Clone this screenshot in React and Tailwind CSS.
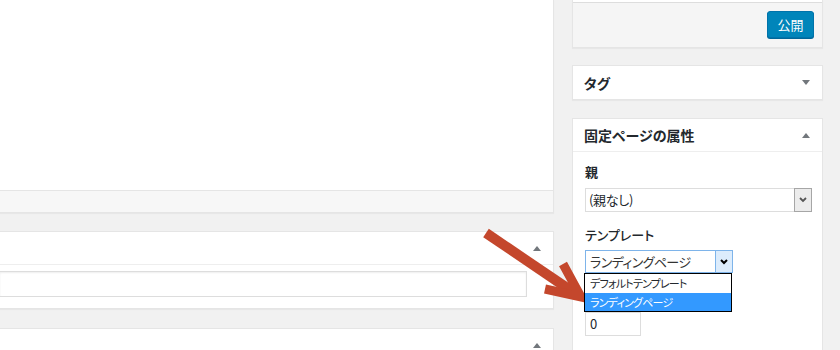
import React from "react";

const TriUp = () => (
  <svg width="8" height="5" viewBox="0 0 8 5"><polygon points="0,5 8,5 4,0" fill="#72777c" /></svg>
);
const TriDown = () => (
  <svg width="8" height="5" viewBox="0 0 8 5"><polygon points="0,0 8,0 4,5" fill="#72777c" /></svg>
);

export default function App() {
  return (
    <div
      className="relative w-[840px] h-[350px] overflow-hidden bg-[#f1f1f1] flex gap-[18px] text-[#23282d] [font-feature-settings:'palt']"
      style={{ fontFamily: '"Noto Sans CJK JP", "Noto Sans", sans-serif' }}
    >
      {/* left column */}
      <div className="w-[554px] shrink-0 flex flex-col">
        <div className="shrink-0 h-[213px] bg-white border-r border-b border-[#e5e5e5] flex flex-col shadow-[0_1px_1px_rgba(0,0,0,0.04)]">
          <div className="flex-1" />
          <div className="h-[22px] bg-[#f7f7f7] border-t border-[#e5e5e5]" />
        </div>
        <div className="shrink-0 mt-[18px] h-[78px] bg-white border-y border-r border-[#e5e5e5] shadow-[0_1px_1px_rgba(0,0,0,0.04)]">
          <div className="h-[33px] border-b border-[#eee] flex items-center justify-end pr-[12px]">
            <TriUp />
          </div>
          <div className="pt-[6px]">
            <div className="w-[527px] h-[26px] border border-l-0 border-[#ddd] bg-white shadow-[inset_0_1px_2px_rgba(0,0,0,0.07)]" />
          </div>
        </div>
        <div className="shrink-0 mt-[19px] h-[80px] bg-white border-t border-r border-[#e5e5e5]">
          <div className="h-[33px] flex items-center justify-end pr-[12px]">
            <TriUp />
          </div>
        </div>
      </div>

      {/* right column */}
      <div className="w-[251px] shrink-0 flex flex-col">
        <div className="shrink-0 h-[48px] bg-white border-x border-b border-[#e5e5e5] shadow-[0_1px_1px_rgba(0,0,0,0.04)] flex flex-col">
          <div className="h-[2px]" />
          <div className="flex-1 bg-[#f5f5f5] border-t border-[#ddd] flex items-start justify-end pr-[8px] pt-[8px]">
            <button className="h-[27px] w-[47px] rounded-[3px] bg-[#0085ba] border border-[#0073aa] shadow-[0_1px_0_#006799] text-white text-[13px] leading-none flex items-center justify-center">
              公開
            </button>
          </div>
        </div>

        <div className="shrink-0 mt-[17px] h-[35px] bg-white border border-[#e5e5e5] shadow-[0_1px_1px_rgba(0,0,0,0.04)] flex items-center justify-between pl-[11px] pr-[12px]">
          <span className="text-[14px] font-semibold leading-none">タグ</span>
          <TriDown />
        </div>

        <div className="shrink-0 mt-[18px] h-[260px] bg-white border border-[#e5e5e5]">
          <div className="h-[33px] border-b border-[#eee] flex items-center justify-between pl-[11px] pr-[12px]">
            <span className="text-[14px] font-semibold leading-none">固定ページの属性</span>
            <TriUp />
          </div>
          <div className="pl-[12px]">
            <div className="mt-[11px] h-[18px] text-[13px] font-semibold leading-[18px]">親</div>
            <div className="mt-[7px] w-[227px] h-[24px] border border-[#ddd] flex items-stretch bg-white">
              <div className="flex-1 pl-[3px] text-[13px] leading-[22px] tracking-[-0.3px]">(親なし)</div>
              <div className="w-[18px] my-[-1px] mr-[-1px] border border-[#a6a6a6] bg-[#ececec] flex items-center justify-center">
                <svg width="8" height="6" viewBox="0 0 8 6"><polyline points="1,1 4,4 7,1" fill="none" stroke="#555" strokeWidth="1.8" /></svg>
              </div>
            </div>
            <div className="mt-[14px] h-[18px] text-[13px] font-medium leading-[18px]">テンプレート</div>
            <div className="relative mt-[6px] w-[148px] h-[23px] border border-[#7eb4ea] flex items-stretch bg-white">
              <div className="flex-1 pl-[4px] text-[13px] leading-[21px] tracking-[-0.6px] text-[#333]">ランディングページ</div>
              <div className="w-[17px] bg-[#dcecfc] border-l border-[#7eb4ea] flex items-center justify-center">
                <svg width="8" height="6" viewBox="0 0 8 6"><polyline points="1,1 4,4 7,1" fill="none" stroke="#000" strokeWidth="2" /></svg>
              </div>
              <div className="absolute z-20 left-[-2px] top-[22px] w-[148px] border border-black bg-white text-[11px] leading-[19px] tracking-[-0.8px]">
                <div className="pl-[5px] h-[19px]">デフォルトテンプレート</div>
                <div className="pl-[5px] h-[18px] bg-[#3399ff] text-white">ランディングページ</div>
              </div>
            </div>
            <div className="mt-[39px] w-[56px] h-[24px] border border-[#ddd] text-[13px] leading-[22px] pl-[4px]">0</div>
          </div>
        </div>
      </div>

      {/* annotation arrow */}
      <svg className="absolute inset-0 z-10 pointer-events-none" width="840" height="350" viewBox="0 0 840 350">
        <line x1="486" y1="233" x2="576" y2="294" stroke="#c4472c" strokeWidth="10" />
        <polyline points="545,289 581,297 563,264" fill="none" stroke="#c4472c" strokeWidth="9" strokeLinejoin="miter" />
      </svg>
    </div>
  );
}
